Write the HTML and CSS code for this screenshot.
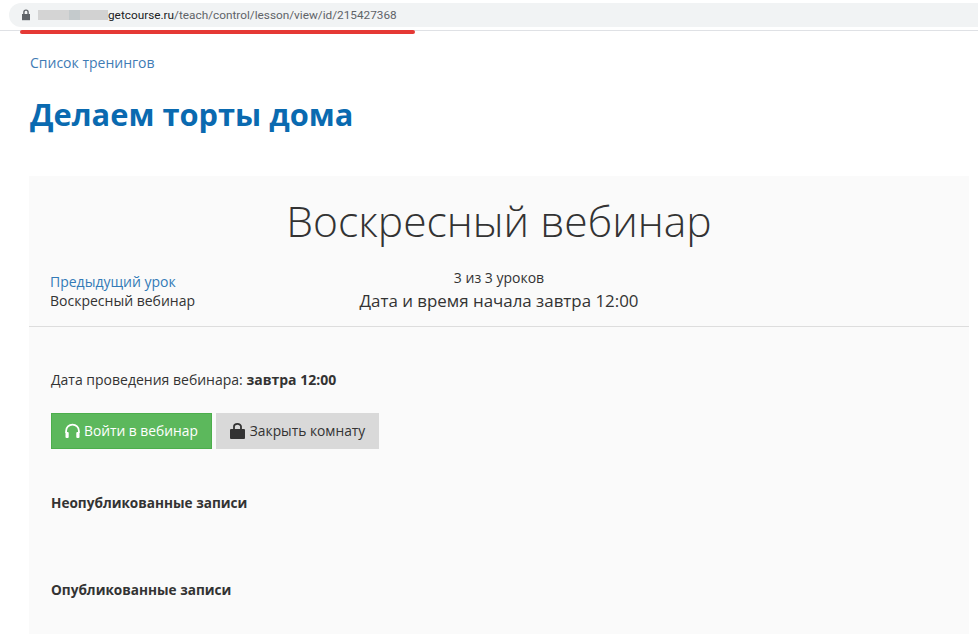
FILE: index.html
```html
<!DOCTYPE html>
<html lang="ru">
<head>
<meta charset="utf-8">
<title>Воскресный вебинар</title>
<link rel="stylesheet" href="styles.css">
</head>
<body>
<header class="toolbar">
  <div class="address">
    <svg class="lock" viewBox="0 0 10 12" width="10" height="12"><path fill="#5f6368" d="M1 5h8v6.2H1z"/><path fill="none" stroke="#5f6368" stroke-width="1.4" d="M2.9 5V3.2a2.1 2.1 0 0 1 4.2 0V5"/></svg>
    <span class="blur"></span><span class="host">getcourse.ru</span><span class="path">/teach/control/lesson/view/id/215427368</span>
  </div>
  <div class="underline"></div>
</header>
<main class="page">
  <a class="crumb" href="#">Список тренингов</a>
  <h1 class="training">Делаем торты дома</h1>
  <section class="card">
    <h2 class="lesson">Воскресный вебинар</h2>
    <div class="nav">
      <div class="prev">
        <a href="#">Предыдущий урок</a>
        <div>Воскресный вебинар</div>
      </div>
      <div class="info">
        <div class="count">3 из 3 уроков</div>
        <div class="start">Дата и время начала завтра 12:00</div>
      </div>
    </div>
    <div class="body">
      <p class="date">Дата проведения вебинара: <b>завтра 12:00</b></p>
      <div class="buttons">
        <a class="btn green" href="#">
          <svg viewBox="0 0 16 16" width="17" height="16"><path fill="none" stroke="#fff" stroke-width="1.8" d="M1.6 10V8a6.4 6.4 0 0 1 12.8 0v2"/><rect x="1" y="9" width="3.2" height="6" rx="1" fill="#fff"/><rect x="11.8" y="9" width="3.2" height="6" rx="1" fill="#fff"/></svg>
          Войти в вебинар
        </a>
        <a class="btn gray" href="#">
          <svg viewBox="0 0 15 16" width="15" height="16"><rect x="0" y="6" width="15" height="10" rx="1" fill="#333"/><path fill="none" stroke="#333" stroke-width="1.8" d="M4 7V3.6a3.5 2.7 0 0 1 7 0V7"/></svg>
          Закрыть комнату
        </a>
      </div>
      <h3 class="sub first">Неопубликованные записи</h3>
      <h3 class="sub">Опубликованные записи</h3>
    </div>
  </section>
</main>
</body>
</html>
```
FILE: styles.css
```css
* { box-sizing: border-box; }
html, body { margin: 0; height: 634px; overflow: hidden; background: #fff; }
body { font-family: "Open Sans", "Noto Sans", sans-serif; color: #333; font-size: 14px; }
a { text-decoration: none; color: #337ab7; }

.toolbar { position: relative; height: 31px; padding-top: 3px; border-bottom: 1px solid #dfe1e5; }
.address {
  display: flex; align-items: center; height: 24px; margin-left: 9px; padding-left: 12px;
  background: #f1f3f4; border-radius: 12px 0 0 12px;
  font-family: "Roboto", sans-serif; font-size: 11.8px; color: #5f6368;
}
.lock { margin-right: 7px; }
.blur { width: 70px; height: 10px; background: linear-gradient(90deg, #d4d4d4 0 45%, #c4cacc 45% 60%, #d2d2d2 60%); }
.host { color: #202124; }
.underline { position: absolute; left: 20px; top: 30px; width: 395px; height: 4px; background: #e53935; border-radius: 2px; }

.page { padding: 23px 9px 0 29px; }
.crumb { display: block; margin-left: 1px; font-size: 14px; line-height: 18px; color: #3f7cb5; }
.training { margin: 22px 0 0 1px; font-size: 30.8px; line-height: 40px; font-weight: 700; color: #0a6ab0; }
.card { margin-top: 42px; height: 458px; background: #fafafa; }
.lesson { margin: 0; padding-top: 18px; text-align: center; font-size: 42.6px; line-height: 52px; font-weight: 300; color: #333; }
.nav { position: relative; height: 81px; padding-top: 22px; border-bottom: 1px solid #ddd; }
.prev { position: absolute; left: 21px; top: 26px; line-height: 19px; font-size: 14px; }
.info { text-align: center; }
.count { font-size: 14px; line-height: 20px; }
.start { font-size: 16.9px; line-height: 25px; }
.body { padding: 43px 22px 0; }
.date { margin: 0; font-size: 14px; line-height: 20px; }
.buttons { display: flex; gap: 4px; margin-top: 23px; }
.btn { display: flex; align-items: center; gap: 3px; height: 36px; padding: 0 13px 1px 12px; font-size: 13.8px; }
.green { background: #5cb85c; color: #fff; border: 1px solid #4cae4c; }
.gray { background: #d9d9d9; color: #333; gap: 5px; padding-left: 14px; padding-right: 14px; }
.sub { margin: 0; font-size: 13.6px; line-height: 20px; font-weight: 700; }
.first { margin-top: 44px; }
.sub + .sub { margin-top: 67px; }
```
